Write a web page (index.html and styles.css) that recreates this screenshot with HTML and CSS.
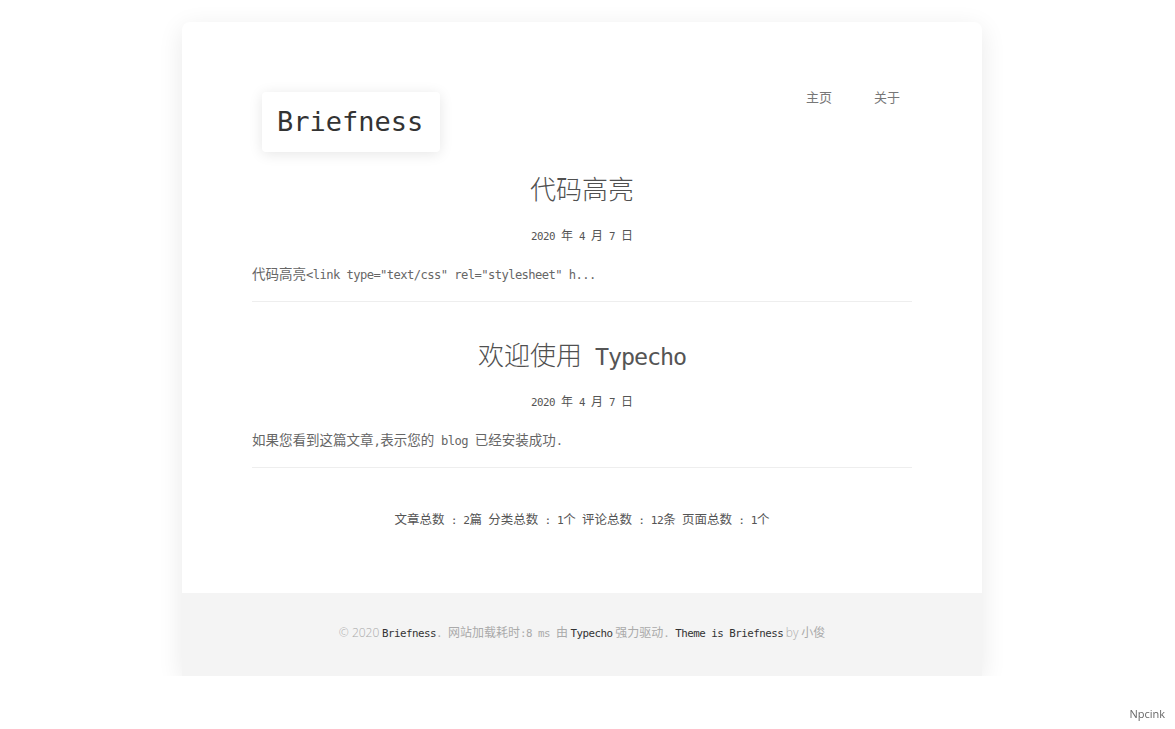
FILE: index.html
```html
<!DOCTYPE html>
<html lang="zh-CN">
<head>
<meta charset="utf-8">
<title>Briefness</title>
<link rel="stylesheet" href="styles.css">
</head>
<body>
<div class="card">
  <div class="main">
    <header class="header">
      <a class="logo" href="#">Briefness</a>
      <nav class="nav">
        <a href="#">主页</a>
        <a href="#">关于</a>
      </nav>
    </header>

    <article class="post">
      <h2 class="post-title">代码高亮</h2>
      <div class="post-date"><span class="en">2020 </span>年<span class="en"> 4 </span>月<span class="en"> 7 </span>日</div>
      <p class="post-excerpt">代码高亮<span class="en">&lt;link type="text/css" rel="stylesheet" h...</span></p>
    </article>

    <article class="post">
      <h2 class="post-title">欢迎使用<span class="en"> Typecho</span></h2>
      <div class="post-date"><span class="en">2020 </span>年<span class="en"> 4 </span>月<span class="en"> 7 </span>日</div>
      <p class="post-excerpt">如果您看到这篇文章<span class="en">,</span>表示您的<span class="en"> blog </span>已经安装成功<span class="en">.</span></p>
    </article>

    <div class="stats">文章总数<span class="en"> : 2</span>篇<span class="en"> </span>分类总数<span class="en"> : 1</span>个<span class="en"> </span>评论总数<span class="en"> : 12</span>条<span class="en"> </span>页面总数<span class="en"> : 1</span>个</div>
  </div>
  <footer class="footer">
    <span class="light">© 2020</span> <a class="en" href="#">Briefness</a><span class="en">. </span>网站加载耗时<span class="en">:8 ms </span>由 <a class="en" href="#">Typecho</a> 强力驱动<span class="en">. </span><a class="en" href="#">Theme is Briefness</a> <span class="light">by</span> 小俊
  </footer>
</div>
<div class="credit">Npcink</div>
</body>
</html>
```

FILE: styles.css
```css
html, body {
  margin: 0;
  padding: 0;
  background: #fff;
}

body {
  padding-right: 11px;
  font-family: "Noto Sans CJK SC", sans-serif;
  color: #555;
}

a {
  color: inherit;
  text-decoration: none;
}

.en {
  font-family: "DejaVu Sans Mono", "Noto Sans CJK SC", monospace;
  font-size: 0.9em;
  letter-spacing: -0.047em;
  line-height: 1;
}

.card {
  width: 800px;
  margin: 22px auto 0;
  background: #fff;
  border-radius: 8px 8px 0 0;
  box-shadow: 0 6px 26px rgba(0, 0, 0, 0.09);
}

.main {
  padding: 65px 70px 64px;
}

.header {
  display: flex;
  justify-content: space-between;
  align-items: flex-start;
}

.logo {
  display: block;
  margin: 5px 0 0 10px;
  padding: 12px 17px 12px 15px;
  height: 36px;
  line-height: 36px;
  border-radius: 4px;
  background: #fff;
  box-shadow: 0 2px 14px rgba(0, 0, 0, 0.1);
  font-family: "DejaVu Sans Mono", monospace;
  font-size: 27px;
  color: #333;
}

.nav {
  display: flex;
  gap: 42px;
  padding-right: 12px;
  font-size: 13px;
  line-height: 20px;
  color: #777;
}

.post {
  border-bottom: 1px solid #eee;
  padding-bottom: 18px;
}

.post + .post {
  margin-top: 34px;
}

.post:first-of-type {
  margin-top: 18px;
}

.post-title {
  margin: 0;
  font-size: 26px;
  line-height: 36px;
  font-weight: 300;
  text-align: center;
  color: #505050;
}

.post-title .en {
  color: #555;
}

.post-date {
  margin-top: 19px;
  font-size: 12px;
  line-height: 20px;
  text-align: center;
  color: #555;
}

.post-excerpt {
  margin: 18px 0 0;
  font-size: 13.5px;
  line-height: 20px;
  color: #666;
}

.stats {
  margin-top: 41px;
  font-size: 12.5px;
  line-height: 20px;
  text-align: center;
  color: #555;
}

.footer {
  background: #f4f4f4;
  padding: 30px 0 34px;
  font-size: 12px;
  line-height: 18px;
  text-align: center;
  color: #aaa;
}

.footer a {
  color: #333;
}

.footer .light {
  font-family: "Open Sans", sans-serif;
  font-weight: 300;
}

.credit {
  position: fixed;
  right: 10px;
  bottom: 8px;
  font-family: "Open Sans", sans-serif;
  font-size: 11px;
  color: #666;
}
```
